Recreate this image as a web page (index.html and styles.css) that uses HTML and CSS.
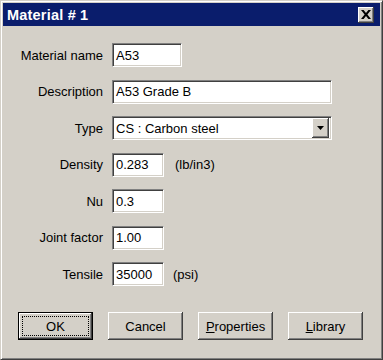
FILE: index.html
```html
<!DOCTYPE html>
<html lang="en">
<head>
    <meta charset="UTF-8">
    <meta name="viewport" content="width=device-width, initial-scale=1.0">
    <title>Material # 1</title>
    <link rel="stylesheet" href="styles.css">
</head>
<body>
    <div class="window">
        <div class="titlebar">
            <span class="title">Material # 1</span>
            <button class="close-btn" aria-label="Close">
                <svg width="10" height="9" viewBox="0 0 10 9">
                    <path d="M0 0h2.6L5 3 7.4 0H10L6.4 4.5 10 9H7.4L5 6 2.6 9H0l3.6-4.5z" fill="#000"/>
                </svg>
            </button>
        </div>

        <div class="form">
            <div class="row">
                <label class="label">Material name</label>
                <div class="field w-name">A53</div>
            </div>
            <div class="row">
                <label class="label">Description</label>
                <div class="field w-wide">A53 Grade B</div>
            </div>
            <div class="row">
                <label class="label">Type</label>
                <div class="field w-wide select">
                    <span>CS : Carbon steel</span>
                    <span class="drop-btn">
                        <svg width="7" height="4" viewBox="0 0 7 4"><path d="M0 0h7L3.5 4z" fill="#000"/></svg>
                    </span>
                </div>
            </div>
            <div class="row">
                <label class="label">Density</label>
                <div class="field w-num">0.283</div>
                <span class="unit">(lb/in3)</span>
            </div>
            <div class="row">
                <label class="label">Nu</label>
                <div class="field w-num">0.3</div>
            </div>
            <div class="row">
                <label class="label">Joint factor</label>
                <div class="field w-num">1.00</div>
            </div>
            <div class="row">
                <label class="label">Tensile</label>
                <div class="field w-num">35000</div>
                <span class="unit unit-psi">(psi)</span>
            </div>
        </div>

        <div class="buttons">
            <button class="btn default"><span class="focus">OK</span></button>
            <button class="btn">Cancel</button>
            <button class="btn"><u>P</u>roperties</button>
            <button class="btn"><u>L</u>ibrary</button>
        </div>
    </div>
</body>
</html>
```

FILE: styles.css
```css
:root {
    --face: #d4d0c8;
    --shadow: #808080;
    --dark: #404040;
    --light: #ffffff;
    --title: #0a1d6c;
}

* {
    box-sizing: border-box;
    margin: 0;
    padding: 0;
}

body {
    background: var(--face);
    font-family: "Liberation Sans", Arial, sans-serif;
    font-size: 13px;
    color: #000;
}

.window {
    width: 383px;
    height: 360px;
    background: var(--face);
    border-top: 1px solid var(--face);
    border-left: 1px solid var(--face);
    border-right: 1px solid var(--dark);
    border-bottom: 1px solid var(--dark);
    box-shadow: inset 1px 1px var(--light), inset -1px -1px var(--shadow);
    padding: 2px;
}

.titlebar {
    height: 23px;
    background: var(--title);
    display: flex;
    align-items: center;
    justify-content: space-between;
    padding: 0 6px 0 4px;
}

.title {
    color: #fff;
    font-weight: bold;
    font-size: 14.5px;
    letter-spacing: 0.2px;
}

.close-btn {
    width: 16px;
    height: 16px;
    background: var(--face);
    border: none;
    box-shadow: inset -1px -1px var(--dark), inset 1px 1px var(--light), inset -2px -2px var(--shadow);
    display: flex;
    align-items: center;
    justify-content: center;
    padding: 0 1px 1px 0;
}

.form {
    display: flex;
    flex-direction: column;
    gap: 12.5px;
    padding-top: 17px;
}

.row {
    display: flex;
    align-items: center;
    height: 24px;
}

.label {
    width: 100px;
    text-align: right;
    margin-right: 9px;
}

.field {
    height: 24px;
    background: #fff;
    border-top: 1px solid var(--shadow);
    border-left: 1px solid var(--shadow);
    border-right: 1px solid var(--light);
    border-bottom: 1px solid var(--light);
    box-shadow: inset 1px 1px var(--dark), inset -1px -1px var(--face);
    padding: 0 3px;
    display: flex;
    align-items: center;
}

.w-name { width: 70px; }
.w-wide { width: 220px; }
.w-num { width: 52px; }

.select {
    justify-content: space-between;
    padding-right: 2px;
}

.drop-btn {
    width: 17px;
    height: 20px;
    background: var(--face);
    box-shadow: inset -1px -1px var(--dark), inset 1px 1px var(--light), inset -2px -2px var(--shadow);
    display: flex;
    align-items: center;
    justify-content: center;
}

.unit {
    margin-left: 11px;
}

.unit-psi {
    margin-left: 9px;
}

.buttons {
    display: flex;
    gap: 15px;
    padding: 26px 0 0 15px;
}

.btn {
    width: 75px;
    height: 28px;
    background: var(--face);
    border: none;
    font-family: "Liberation Sans", Arial, sans-serif;
    font-size: 13px;
    color: #000;
    box-shadow: inset -1px -1px var(--dark), inset 1px 1px var(--light), inset -2px -2px var(--shadow);
    display: flex;
    align-items: center;
    justify-content: center;
}

.btn.default {
    border: 1px solid #000;
    padding: 3px;
}

.focus {
    flex: 1;
    align-self: stretch;
    border: 1px dotted #000;
    display: flex;
    align-items: center;
    justify-content: center;
}
```
